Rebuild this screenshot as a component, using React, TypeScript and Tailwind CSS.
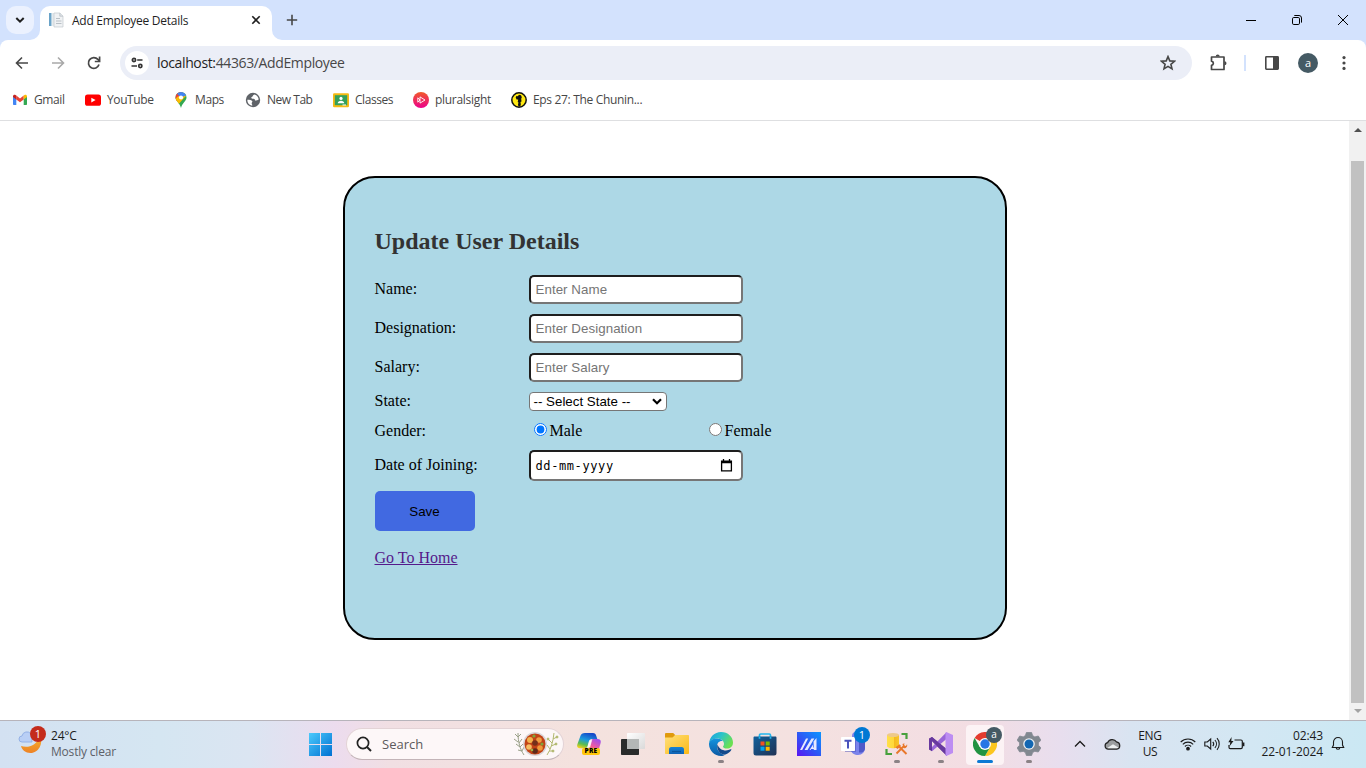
import React from "react";

const UI = "font-['Open_Sans','Noto_Sans',sans-serif]";

/* ---------- Browser chrome ---------- */

function WindowTitleBar() {
  return (
    <header className="flex h-10 items-stretch bg-[#d3e2fd]">
      <div className="flex w-10 items-start pl-1.5 pt-1.5">
        <button className="flex h-7 w-7 items-center justify-center rounded-[10px] bg-[#ebf1fe]">
          <svg width="10" height="8" viewBox="0 0 10 8" fill="none" stroke="#1f1f1f" strokeWidth="2">
            <path d="M1.3 2 5 5.7 8.7 2" />
          </svg>
        </button>
      </div>
      <div className="relative mt-1.5 flex w-[232px] items-center rounded-t-[10px] bg-white pb-1.5">
        <svg className="absolute -left-2.5 bottom-0" width="10" height="10" viewBox="0 0 10 10">
          <path d="M10 0v10H0A10 10 0 0 0 10 0" fill="#fff" />
        </svg>
        <svg className="absolute -right-2.5 bottom-0" width="10" height="10" viewBox="0 0 10 10">
          <path d="M0 0v10h10A10 10 0 0 1 0 0" fill="#fff" />
        </svg>
        <svg className="ml-2 shrink-0" width="16" height="16" viewBox="0 0 16 16">
          <rect x="1" y="1" width="2.5" height="13" fill="#6aa3c8" />
          <rect x="4" y="1" width="6.5" height="13" fill="#e6ebee" />
          <path d="M6 1h6l3 3v11H6z" fill="#f0f2f4" stroke="#c2c8cd" strokeWidth=".7" />
          <path d="M11.8 1v3.2H15" fill="#dfe4e8" stroke="#b5bcc2" strokeWidth=".7" />
          <path d="M8 6.5h4M8 9h5.5M8 11.5h5.5" stroke="#b9c0c6" strokeWidth="1" />
        </svg>
        <span className="ml-2 w-[176px] whitespace-nowrap pt-0.5 text-[12px] leading-4 tracking-[-0.27px] text-[#1f1f1f]">Add Employee Details</span>
        <svg width="16" height="16" viewBox="0 0 16 16" stroke="#1f1f1f" strokeWidth="1.6">
          <path d="m4.3 4.3 7.4 7.4m0-7.4-7.4 7.4" />
        </svg>
      </div>
      <div className="flex w-10 items-center justify-center">
        <svg width="12" height="12" viewBox="0 0 12 12" stroke="#474747" strokeWidth="1.6">
          <path d="M6 .8v10.4M.8 6h10.4" />
        </svg>
      </div>
      <div className="ml-auto flex">
        <div className="flex w-[46px] items-center justify-center">
          <svg width="10" height="10" viewBox="0 0 10 10" stroke="#000"><path d="M0 5.5h10" /></svg>
        </div>
        <div className="flex w-[46px] items-center justify-center">
          <svg width="10" height="10" viewBox="0 0 10 10" fill="none" stroke="#000">
            <rect x=".5" y="2.5" width="7" height="7" rx="1.3" />
            <path d="M2.3.5H7A2.5 2.5 0 0 1 9.5 3v4.6" />
          </svg>
        </div>
        <div className="flex w-[46px] items-center justify-center">
          <svg width="10" height="10" viewBox="0 0 10 10" stroke="#000"><path d="m0 0 10 10m0-10L0 10" /></svg>
        </div>
      </div>
    </header>
  );
}

function Toolbar() {
  return (
    <div className="bg-[#d3e2fd]">
      <div className="flex h-[46px] items-center rounded-t-[8px] bg-white pl-1">
        <div className="flex w-9 justify-center">
          <svg width="14" height="14" viewBox="0 0 14 14" fill="none" stroke="#474747" strokeWidth="1.6"><path d="M13 7H2M7 1.5 1.5 7 7 12.5" /></svg>
        </div>
        <div className="flex w-9 justify-center">
          <svg width="14" height="14" viewBox="0 0 14 14" fill="none" stroke="#a9a9a9" strokeWidth="1.6"><path d="M1 7h11M7 1.5 12.5 7 7 12.5" /></svg>
        </div>
        <div className="flex w-9 justify-center">
          <svg width="14" height="14" viewBox="0 0 14 14" fill="none" stroke="#474747" strokeWidth="1.7"><path d="M12 8.6A5.4 5.4 0 1 1 10.9 3.4L12.6 5M12.6.6v4.9H7.8" /></svg>
        </div>
        <div className="ml-2 flex h-[34px] w-[1072px] items-center rounded-full bg-[#ebeef7] pl-[5px]">
          <div className="flex h-6 w-6 items-center justify-center rounded-full bg-white">
            <svg width="14" height="12" viewBox="0 0 14 12" fill="none" stroke="#333" strokeWidth="1.7">
              <circle cx="4" cy="3" r="1.6" /><path d="M7.200 3H12.500M1.500 9h5.500" /><circle cx="10.300" cy="9" r="1.6" />
            </svg>
          </div>
          <span className="ml-2 text-[14px] leading-5 tracking-[-0.37px] text-[#474747]">
            <span className="text-[#1f1f1f]">localhost:</span>44363/AddEmployee
          </span>
          <svg className="ml-auto mr-4" width="16" height="16" viewBox="0 0 16 16" fill="none" stroke="#474747" strokeWidth="1.6">
            <path d="m8 1.6 1.8 4.3 4.7.4-3.6 3 1.1 4.6L8 11.4l-4 2.5 1.100-4.600-3.600-3 4.700-.4z" />
          </svg>
        </div>
        <div className="ml-2 flex w-9 justify-center">
          <svg width="18" height="18" viewBox="0 0 18 18" fill="none" stroke="#474747" strokeWidth="1.700" strokeLinejoin="round">
            <path d="M2.500 3h12.500v12.500H2.500v-4.200c2.500-.4 2.500-3.700 0-4.100z" />
            <path d="M6.700 2.500a2 2 0 0 1 4 0zM15.500 7.300a2 2 0 0 1 0 4z" fill="#474747" stroke="none" />
          </svg>
        </div>
        <div className="ml-2 h-4 w-0.5 bg-[#d3e2fd]" />
        <div className="ml-2 flex w-9 justify-center">
          <svg width="16" height="16" viewBox="0 0 16 16"><rect x="1.800" y="1.800" width="12.400" height="12.400" fill="none" stroke="#474747" strokeWidth="1.600" rx=".6" /><path d="M9 2h5v12H9z" fill="#474747" /></svg>
        </div>
        <div className="flex w-9 justify-center">
          <span className="flex h-5 w-5 items-center justify-center rounded-full bg-[#455a64] pb-0.5 text-[11px] leading-none text-white">a</span>
        </div>
        <div className="flex w-9 justify-center">
          <svg width="4" height="14" viewBox="0 0 4 14" fill="#474747"><circle cx="2" cy="1.600" r="1.600" /><circle cx="2" cy="7" r="1.600" /><circle cx="2" cy="12.400" r="1.600" /></svg>
        </div>
      </div>
    </div>
  );
}

function GmailIcon() {
  return (
    <svg width="16" height="16" viewBox="0 0 16 16">
      <path d="M1 4v8.200c0 .5.300.8.800.8H4.300V6.500z" fill="#4285f4" />
      <path d="M15 4v8.200c0 .5-.3.8-.8.8H11.700V6.500z" fill="#34a853" />
      <path d="M4.300 7.400V3.600L8 6.400l3.700-2.800v3.800L8 10.200z" fill="#ea4335" />
      <path d="M1 4.300c0-1.500 1.500-2 2.500-1.300l.8.6v3.800L1 5z" fill="#c5221f" />
      <path d="M15 4.300c0-1.500-1.500-2-2.500-1.300l-.8.6v3.800L15 5z" fill="#fbbc04" />
    </svg>
  );
}

function YouTubeIcon() {
  return (
    <svg width="16" height="16" viewBox="0 0 16 16"><rect y="2.400" width="16" height="11.400" rx="2.600" fill="#f00" /><path d="M6.300 5.700v4.800L10.600 8.100z" fill="#fff" /></svg>
  );
}

function MapsIcon() {
  return (
    <svg width="16" height="16" viewBox="0 0 16 16">
      <defs><clipPath id="pin"><path d="M8 0a5.500 5.500 0 0 0-5.500 5.500c0 3.500 4 5 5.500 10.500 1.500-5.500 5.500-7 5.500-10.500A5.500 5.500 0 0 0 8 0" /></clipPath></defs>
      <g clipPath="url(#pin)">
        <path d="M0 0h16v16H0z" fill="#34a853" />
        <path d="M0 0h9.500L8 5.500 3.600 9.500 0 6z" fill="#ea4335" />
        <path d="M3.400 9.300 12.500 0v4.200L5.300 12.400z" fill="#fbbc04" />
        <path d="M6 0h6l3 2.500L8 5.500 4 1.800z" fill="#4285f4" />
        <path d="m2 7 3.500-3 2 2-4 4z" fill="#fbbc04" />
      </g>
      <circle cx="8" cy="5.500" r="2.100" fill="#fff" />
    </svg>
  );
}

function GlobeIcon() {
  return (
    <svg width="16" height="16" viewBox="0 0 16 16">
      <circle cx="8" cy="8" r="7.200" fill="#5f6368" />
      <path d="M9.600 2.400C7.500 3 8.200 4.300 6.800 5c-1.200.6-.6 1.800.6 1.800 1.800 0 2.600.4 2.600 1.600 1.400.4 2.300-.2 3.700-.8A6 6 0 0 0 9.600 2.400M2.300 7.800c2.200.1 4.500.4 5 1.400.4 1-.7 1.200-.6 2.300.1.800.8 1 .5 2.200A6 6 0 0 1 2.300 7.800" fill="#fff" />
    </svg>
  );
}

function ClassroomIcon() {
  return (
    <svg width="16" height="16" viewBox="0 0 16 16">
      <rect y="1.200" width="16" height="14" rx="1.200" fill="#f5ba14" />
      <path d="M1.800 3.200h12.400v10H1.800z" fill="#34a05a" />
      <circle cx="8" cy="6.400" r="1.600" fill="#fff" />
      <path d="M4.700 11.300c0-3.500 6.600-3.500 6.600 0zM9.500 12.600h3.500v.8H9.500z" fill="#fff" />
    </svg>
  );
}

function PluralsightIcon() {
  return (
    <svg width="16" height="16" viewBox="0 0 16 16" fill="none" stroke="#fff" strokeWidth=".9">
      <defs><linearGradient id="ps" x2="0" y2="1"><stop stopColor="#f15b2a" /><stop offset="1" stopColor="#ec008c" /></linearGradient></defs>
      <circle cx="8" cy="8" r="8" fill="url(#ps)" stroke="none" />
      <path d="M4.800 5.800v4.400L7 8zM7 4.900v6.200L12 8z" />
    </svg>
  );
}

function AnimeIcon() {
  return (
    <svg width="16" height="16" viewBox="0 0 16 16">
      <circle cx="8" cy="8" r="7.200" fill="#ffe912" stroke="#111" strokeWidth="1.500" />
      <path d="M4.700 5.600 5.400 4l1.400.2L8 2.700l2 .5.800 2-.6 1.600.3 2.800-1 .4.300 2.600-.5 2H7.400l-.4-2 .5-2.200-.8-.4.500-2.600-1.600.2z" fill="#111" />
    </svg>
  );
}

const bookmarks = [
  { label: "Gmail", icon: <GmailIcon />, box: "w-[73px]", text: "tracking-[-0.4px]" },
  { label: "YouTube", icon: <YouTubeIcon />, box: "w-[88px]", text: "tracking-[-0.4px]" },
  { label: "Maps", icon: <MapsIcon />, box: "w-[72px]", text: "tracking-[-0.4px]" },
  { label: "New Tab", icon: <GlobeIcon />, box: "w-[88px]", text: "tracking-[-0.48px]" },
  { label: "Classes", icon: <ClassroomIcon />, box: "w-[80px]", text: "tracking-[-0.45px]" },
  { label: "pluralsight", icon: <PluralsightIcon />, box: "w-[98px]", text: "tracking-[-0.3px]" },
  { label: "Eps 27: The Chunin...", icon: <AnimeIcon />, box: "w-[150px]", text: "tracking-[-0.33px]" },
];

function BookmarksBar() {
  return (
    <nav className="flex h-[35px] items-center border-b border-[#dedfe1] bg-white pb-1.5 pl-3">
      {bookmarks.map((b) => (
        <div key={b.label} className={`flex shrink-0 items-center gap-1.5 ${b.box}`}>
          {b.icon}
          <span className={`whitespace-nowrap text-[12px] leading-4 text-[#474747] ${b.text}`}>{b.label}</span>
        </div>
      ))}
    </nav>
  );
}

/* ---------- Page ---------- */

const FIELD = "h-full w-[214px] rounded-[5px] border-2 border-t-[#1e1e1e] border-l-[#1e1e1e] border-r-[#767676] border-b-[#767676] bg-white font-['Liberation_Sans',Arial,sans-serif] text-[13.333px]";

function Row({ label, height, children }: { label: string; height: string; children: React.ReactNode }) {
  return (
    <div className={`flex items-center ${height}`}>
      <span className="w-[154px] shrink-0 pb-px leading-[18px]">{label}</span>
      {children}
    </div>
  );
}

function EmployeeForm() {
  return (
    <form className="h-[464px] w-[664px] rounded-[32px] border-2 border-black bg-[#add8e6] pl-[30px] pt-[50px] font-['Liberation_Serif','Times_New_Roman',serif] text-[16px] text-black">
      <h2 className="text-[24px] font-bold leading-[27px] text-[#333]">Update User Details</h2>
      <div className="mt-5 flex flex-col gap-2.5">
        <Row label="Name:" height="h-[29px]"><input className={`${FIELD} pl-[5px] tracking-[0.05px] placeholder:text-[#757575]`} placeholder="Enter Name" /></Row>
        <Row label="Designation:" height="h-[29px]"><input className={`${FIELD} pl-[5px] tracking-[0.05px] placeholder:text-[#757575]`} placeholder="Enter Designation" /></Row>
        <Row label="Salary:" height="h-[29px]"><input className={`${FIELD} pl-[5px] tracking-[0.05px] placeholder:text-[#757575]`} placeholder="Enter Salary" /></Row>
        <Row label="State:" height="h-[19px]">
          <button type="button" className="flex h-[19px] w-[138px] items-center justify-between rounded-[4px] border border-[#767676] bg-white pl-1 pr-1 font-['Liberation_Sans',Arial,sans-serif] text-[13.333px] leading-[15px]">
            -- Select State --
            <svg width="10" height="7" viewBox="0 0 10 7" fill="none" stroke="#000" strokeWidth="2.200"><path d="M1 1.200 5 5.200 9 1.200" /></svg>
          </button>
        </Row>
        <Row label="Gender:" height="h-[20px] -mb-px">
          <label className="flex w-[175px] items-center gap-[3px] pl-[5px]">
            <input type="radio" name="gender" defaultChecked className="mb-1 h-[13px] w-[13px] accent-[#0075ff]" />Male
          </label>
          <label className="flex items-center gap-[3px] pl-[5px]">
            <input type="radio" name="gender" className="mb-1 h-[13px] w-[13px]" />Female
          </label>
        </Row>
        <Row label="Date of Joining:" height="h-[31px]">
          <div className={`${FIELD} flex items-center justify-between pl-[5px] pr-2`}>
            <span className="whitespace-nowrap font-['DejaVu_Sans_Mono',monospace] text-[12px] leading-4 tracking-[0.6px]">dd-mm-yyyy</span>
            <svg width="13" height="13" viewBox="0 0 13 13" fill="none" stroke="#000" strokeWidth="1.300"><path d="M1.600 2.200h9.800v9.600H1.600zM1.600 3.500h9.800M3.500 0v2.500M9.500 0v2.500" /></svg>
          </div>
        </Row>
      </div>
      <button type="button" className="mt-2.5 block h-10 w-[100px] rounded-[5px] bg-[#4169e1] pt-px font-['Liberation_Sans',Arial,sans-serif] text-[13.333px]">Save</button>
      <a href="#home" className="mt-[18px] inline-block leading-[18px] text-[#551a8b] underline">Go To Home</a>
    </form>
  );
}

function Scrollbar() {
  return (
    <div className="flex w-[17px] flex-col items-center bg-[#f1f1f1]">
      <div className="flex h-10 items-start pt-[7px]">
        <svg width="8" height="4" viewBox="0 0 8 4"><path d="M0 4 4 0l4 4z" fill="#505050" /></svg>
      </div>
      <div className="h-[542px] w-[13px] bg-[#c1c1c1]" />
      <div className="flex flex-1 items-center pb-px">
        <svg width="8" height="4" viewBox="0 0 8 4"><path d="m0 0 4 4 4-4z" fill="#a3a3a3" /></svg>
      </div>
    </div>
  );
}

/* ---------- Taskbar ---------- */

function CopilotIcon() {
  return (
    <svg width="24" height="24" viewBox="0 0 24 24">
      <defs>
        <linearGradient id="cp1" x1=".6" y1="0" x2=".2" y2="1"><stop stopColor="#1648c8" /><stop offset=".45" stopColor="#1c9bdd" /><stop offset=".75" stopColor="#5fbd4d" /><stop offset="1" stopColor="#f4d21f" /></linearGradient>
        <linearGradient id="cp2" x1=".8" y1="0" x2=".2" y2="1"><stop stopColor="#9b4df0" /><stop offset=".55" stopColor="#ee5a9e" /><stop offset="1" stopColor="#fb8a45" /></linearGradient>
      </defs>
      <path d="M8 1h8c2 0 2.600 1 3.200 2.800L20.300 7H15c-2 0-2.700 1-3.200 2.600l-1.300 4.600c-.5 1.500-1.200 2-2.700 2H3c-2.600 0-3.300-1.700-2.700-3.800L3.400 4C4 2 5.500 1 8 1" fill="url(#cp1)" />
      <path d="M16 7h4.500c2.700 0 3.700 1.500 3.100 4l-1.700 6c-.5 2-1.900 3-3.900 3H9c2 0 2.500-1 3-2.500l2-7.800C14.500 8 15 7 16 7" fill="url(#cp2)" />
      <path d="M12.500 8.500 10.500 15h2.700l2-7z" fill="#fff" opacity=".8" />
    </svg>
  );
}

function ExplorerIcon() {
  return (
    <svg width="24" height="24" viewBox="0 0 24 24">
      <defs>
        <linearGradient id="fx" x2="1" y2="1"><stop stopColor="#ffe07a" /><stop offset="1" stopColor="#fbb917" /></linearGradient>
        <linearGradient id="fx2" x2="0" y2="1"><stop stopColor="#1784d4" /><stop offset="1" stopColor="#0f63b6" /></linearGradient>
      </defs>
      <path d="M0 2.200C0 1.500.5 1 1.200 1h7l2 2-1.500 3H0z" fill="#e09a0c" />
      <path d="M0 5.500h7.500L10.200 3H23c.6 0 1 .4 1 1v17c0 .6-.4 1-1 1H1c-.6 0-1-.4-1-1z" fill="url(#fx)" />
      <path d="M4 22v-4.500c0-1.500.8-2.500 2.300-2.500h10.400c1.500 0 2.300 1 2.300 2.500V22z" fill="url(#fx2)" />
      <path d="M7 19.500h9" stroke="#0a559c" strokeWidth="1.200" />
    </svg>
  );
}

function EdgeIcon() {
  return (
    <svg width="24" height="24" viewBox="0 0 24 24">
      <defs>
        <linearGradient id="ed1" x2="1" y2=".5"><stop stopColor="#1b9de2" /><stop offset=".5" stopColor="#2cc4c8" /><stop offset="1" stopColor="#6be052" /></linearGradient>
        <linearGradient id="ed2" x2="0" y2="1"><stop stopColor="#1494df" /><stop offset="1" stopColor="#0c59a4" /></linearGradient>
      </defs>
      <path d="M0 11.500C.5 5 5.500 0 12 0c7 0 12 5 12 10.500 0 4-3 6-6 6-2.500 0-4-1-4-1.800 0-.7 1-1 1-3C15 9 12 6.500 8.300 6.500 4 6.500.8 9 0 11.500" fill="url(#ed1)" />
      <path d="M0 11.500C.5 8.500 4 6.500 8 6.500c2.600 0 5 1.200 6 2.700-4-.6-6 2.300-6 5 0 4.500 3.500 8.300 8.300 8.300C15 23.500 13.500 24 12 24 5 24-.3 18 0 11.500" fill="url(#ed2)" />
      <path d="M8.500 12.200C7 17.500 11 22.800 16.500 22.500c3-1 5.300-3.300 5.900-4.700.3-.6-.2-.8-.7-.5-5 2.500-11.500 1-13.200-5.100" fill="#134a8c" />
    </svg>
  );
}

function StoreIcon() {
  return (
    <svg width="24" height="24" viewBox="0 0 24 24">
      <defs><linearGradient id="st" x2="1" y2="1"><stop stopColor="#11609c" /><stop offset="1" stopColor="#203254" /></linearGradient></defs>
      <path d="M6.500 6V3.300C6.500 2.500 7 2 7.700 2h8.600c.8 0 1.200.5 1.200 1.300V6" fill="none" stroke="#22b5ed" strokeWidth="1.700" />
      <path d="M.5 5.500C.5 5 1 4.500 1.500 4.500h21c.5 0 1 .5 1 1V21a2.500 2.500 0 0 1-2.500 2.500H3A2.500 2.500 0 0 1 .5 21z" fill="url(#st)" />
      <path d="M6.500 6.800V4.500M17.500 6.800V4.500" stroke="#22b5ed" strokeWidth="1.700" />
      <path d="M7.500 9.500h4v4h-4z" fill="#f25022" /><path d="M12.700 9.500h4v4h-4z" fill="#7fba00" />
      <path d="M7.500 14.700h4v4h-4z" fill="#00a4ef" /><path d="M12.700 14.700h4v4h-4z" fill="#ffb900" />
    </svg>
  );
}

function AsusIcon() {
  return (
    <svg width="24" height="24" viewBox="0 0 24 24">
      <defs><linearGradient id="as" x1="1" y1="0" x2="0" y2="1"><stop stopColor="#0b96ff" /><stop offset=".5" stopColor="#2c5bf5" /><stop offset="1" stopColor="#5a14f2" /></linearGradient></defs>
      <path d="M0 0h24v24H0z" fill="url(#as)" />
      <path d="M3 18 9 6.500h2.200L5.200 18zM7.500 18l7-11.500h2.800L10.500 18zM16.500 9.500l3-3.500v12h-2.700zM12.500 18l3.500-5.500v3h.8v1.500h-2.700l-.5 1z" fill="#e6e9ff" />
    </svg>
  );
}

function TeamsIcon() {
  return (
    <svg width="24" height="24" viewBox="0 0 24 24">
      <circle cx="15" cy="4" r="4" fill="#7b83eb" />
      <path d="M9 8h15v8c0 4-3 7-7 7-3.500 0-6.500-2-7.500-5z" fill="#7b83eb" />
      <path d="M18 8h6v8c0 2-1 4-3.500 4.500H18z" fill="#5059c9" />
      <path d="M4 7h11v13H4z" fill="#4b53bc" opacity=".5" />
      <rect y="5" width="14" height="14" rx=".8" fill="#fff" />
      <path d="M3.500 8.700h7M7 8.500v8" stroke="#4b53bc" strokeWidth="2" />
    </svg>
  );
}

function SqlToolsIcon() {
  return (
    <svg width="24" height="24" viewBox="0 0 24 24">
      <defs><linearGradient id="sq"><stop stopColor="#ffe04a" /><stop offset=".55" stopColor="#ffd83a" /><stop offset=".6" stopColor="#f5b91e" /><stop offset="1" stopColor="#f8c52a" /></linearGradient></defs>
      <path d="M2 3v11c0 3 12 3 12 0V3z" fill="url(#sq)" />
      <ellipse cx="8" cy="3" rx="6" ry="2" fill="#eec98a" />
      <path d="M16.500 2h5v5M1.500 17v5h5.500" fill="none" stroke="#48a13d" strokeWidth="2.200" />
      <path d="m11.500 21.500 8-8M13.500 14l8 8" stroke="#e9772a" strokeWidth="1.900" />
      <path d="m10.500 15.200 4-3 1.500 1.700-3.500 3zM17.500 12l2-.8-.5 2.300 2 .5 1-1.800c1 2.800-1.500 4.500-3.500 3.800z" fill="#e9772a" />
    </svg>
  );
}

function VisualStudioIcon() {
  return (
    <svg width="24" height="24" viewBox="0 0 24 24">
      <path d="M0 6.800 3 5v14.200l-3-1.700z" fill="#5c3399" />
      <path d="M3 5 18 17.500V24L3 9z" fill="#68399f" />
      <path d="M3 19.200V15L17.200.4 18 6.500z" fill="#9a66d8" />
      <path d="M0 6.800 3 5l15 12.500V24L3 9v7l-3 1.500z" fill="#68399f" />
      <path d="M17.300 0 24 3v18l-6.700 3c-.5-.2-.8-.5-.8-1V1c0-.5.300-.8.800-1" fill="#bd8df2" />
    </svg>
  );
}

function ChromeIcon() {
  return (
    <svg width="24" height="24" viewBox="0 0 24 24">
      <path d="M12 12 1.600 6A12 12 0 0 1 22.400 6z" fill="#e33b2e" />
      <path d="M12 6h10.400A12 12 0 0 1 12 24l5.200-9z" fill="#fcc61f" />
      <path d="m17.200 15-5.200 9A12 12 0 0 1 1.600 6l5.200 9z" fill="#229342" />
      <circle cx="12" cy="12" r="6" fill="#fff" /><circle cx="12" cy="12" r="4.700" fill="#2676e5" />
    </svg>
  );
}

function SettingsIcon() {
  return (
    <svg width="24" height="24" viewBox="0 0 24 24">
      <path d="M9.400.5h5.200l1 3.100 2.200 1.300 3.500-.9L23.900 8.300 21.400 10.800v2.500l2.500 2.500-2.600 4.200-3.500-.7-2.200 1.200-1 3H9.400l-1-3-2.200-1.200-3.500.7L.1 15.800l2.500-2.500v-2.500L.1 8.300 2.700 4l3.500.9 2.200-1.300z" fill="#818890" stroke="#818890" strokeWidth=".8" strokeLinejoin="round" />
      <circle cx="12" cy="12" r="5.800" fill="#eef0f2" /><circle cx="12" cy="12" r="4.500" fill="#1267b2" />
    </svg>
  );
}

function TaskViewIcon() {
  return (
    <svg width="24" height="24" viewBox="0 0 24 24">
      <defs><linearGradient id="tv" x2="1" y2="1"><stop stopColor="#fff" /><stop offset="1" stopColor="#d9d9d9" /></linearGradient></defs>
      <rect y="7" width="18" height="16" rx=".8" fill="#292b2b" />
      <rect x="6" y="1" width="18" height="16" rx=".8" fill="url(#tv)" />
      <path d="M6 7h12v10H6z" fill="#b4b7b6" />
    </svg>
  );
}

type App = { name: string; icon: React.ReactNode; badge?: React.ReactNode; running?: boolean; active?: boolean };

const apps: App[] = [
  { name: "copilot", icon: <CopilotIcon />, badge: <span className="absolute left-3 top-[23px] flex h-[7px] w-[18px] items-center justify-center rounded-[2px] bg-[#ffc60b] text-[6.5px] font-extrabold leading-none tracking-[0.3px] text-black">PRE</span> },
  { name: "taskview", icon: <TaskViewIcon /> },
  { name: "explorer", icon: <ExplorerIcon /> },
  { name: "edge", icon: <EdgeIcon />, running: true },
  { name: "store", icon: <StoreIcon /> },
  { name: "asus", icon: <AsusIcon /> },
  { name: "teams", icon: <TeamsIcon />, badge: <span className="absolute left-5 top-0.5 flex h-4 w-4 items-center justify-center rounded-full bg-[#0078d4] text-[11px] leading-none text-white">1</span> },
  { name: "sql", icon: <SqlToolsIcon />, running: true },
  { name: "vs", icon: <VisualStudioIcon />, running: true },
  { name: "chrome", icon: <ChromeIcon />, active: true, badge: <span className="absolute left-5 top-0.5 flex h-4 w-4 items-center justify-center rounded-full bg-[#455a64] pb-px text-[10px] leading-none text-white">a</span> },
  { name: "settings", icon: <SettingsIcon />, running: true },
];

function SearchBox() {
  return (
    <div className="mb-0.5 ml-1 flex h-8 w-[218px] items-center rounded-full border border-[#e3d3d6] border-b-[#c3b4b8] bg-[#fdf7f8] pl-[9px]">
      <svg width="16" height="16" viewBox="0 0 16 16" fill="none" stroke="#222" strokeWidth="1.700"><circle cx="7" cy="7" r="5.600" /><path d="m11 11 4 4" strokeWidth="2" /></svg>
      <span className="ml-2.5 text-[13px] leading-4 text-[#5c5a5c]">Search</span>
      <svg className="ml-auto mr-1" width="46" height="28" viewBox="0 0 46 28">
        <g stroke="#9aa088" strokeWidth="1" fill="none">
          <path d="M5 3C5 12 7 19 11 25M5 7 2 4M5 7l3-3M5 12l-4-3M6 13l3-4M7 17l-4-3M7 17l3-3M9 21l-4-1M9 21l2-4" />
        </g>
        <g stroke="#b2b86f" strokeWidth="1" fill="#b2b86f">
          <path d="M41 3C40 12 38 19 34 25M40 9l4-2M39 13l-4-4M38 16l5-2M37 19l-3-4M36 21l4 0" fill="none" />
          <circle cx="44" cy="7" r="1" /><circle cx="35" cy="9" r="1" /><circle cx="43" cy="14" r="1" /><circle cx="40" cy="21" r="1" />
        </g>
        <circle cx="22" cy="14" r="12" fill="#d9d6d9" /><circle cx="22" cy="14" r="10.500" fill="#c24317" />
        <circle cx="17" cy="10" r="3" fill="#f2b24d" /><circle cx="26" cy="10" r="2.800" fill="#ef9f43" /><circle cx="16" cy="17" r="2.800" fill="#f6bd63" />
        <circle cx="27" cy="18" r="2.800" fill="#f09a3a" /><circle cx="22" cy="13" r="2.800" fill="#74301b" /><circle cx="22" cy="21" r="2.800" fill="#5e2a1b" />
        <circle cx="21" cy="6" r="1.600" fill="#7fa63a" /><circle cx="29" cy="14" r="1.600" fill="#7fa63a" /><circle cx="19" cy="20" r="1.300" fill="#9fb44a" />
      </svg>
    </div>
  );
}

function SystemTray() {
  return (
    <div className="flex items-center pb-0.5">
      <div className="ml-[13px] flex w-8 justify-center">
        <svg width="12" height="8" viewBox="0 0 12 8" fill="none" stroke="#1b1b1b" strokeWidth="1.300"><path d="M1 6.500 6 1.500l5 5" /></svg>
      </div>
      <div className="flex w-8 justify-center">
        <svg width="17" height="12" viewBox="0 0 17 12">
          <path d="M4.300 11.200A3.300 3.300 0 0 1 3.600 4.700 5 5 0 0 1 12.500 3.900a3.700 3.700 0 0 1 .3 7.300z" fill="#9b9d9f" />
          <path d="M2.500 10.500 9 6.200l5.800 3.500c-.5.600-1.200 1-2 1H4.300z" fill="#eceeef" />
          <path d="M4.300 11.200A3.300 3.300 0 0 1 3.600 4.700 5 5 0 0 1 12.500 3.900a3.700 3.700 0 0 1 .3 7.300z" fill="none" stroke="#222" strokeWidth="1.200" />
        </svg>
      </div>
      <div className="w-11 pt-px text-center text-[12px] leading-4 tracking-[-0.3px]">ENG<br />US</div>
      <div className="ml-1 flex w-6 justify-center">
        <svg width="16" height="14" viewBox="0 0 16 14" fill="none" stroke="#1b1b1b" strokeWidth="1.100">
          <path d="M.7 5a10.300 10.300 0 0 1 14.600 0M2.800 7.300a7.300 7.300 0 0 1 10.400 0M4.900 9.500a4.400 4.400 0 0 1 6.200 0" /><circle cx="8" cy="11.700" r="1.300" fill="#1b1b1b" />
        </svg>
      </div>
      <div className="flex w-6 justify-center">
        <svg width="16" height="14" viewBox="0 0 16 14" fill="none" stroke="#1b1b1b" strokeWidth="1.100">
          <path d="M.8 5v4h2.500l3.400 3V2L3.300 5zM8.800 4.800a3.400 3.400 0 0 1 0 4.400M10.900 3a6 6 0 0 1 0 8M13 1.200a8.700 8.700 0 0 1 0 11.600" />
        </svg>
      </div>
      <div className="flex w-6 justify-center">
        <svg width="17" height="14" viewBox="0 0 17 14" fill="none" stroke="#1b1b1b" strokeWidth="1.200">
          <path d="M6.500 3h6.500c.8 0 1.300.5 1.300 1.300v6c0 .8-.5 1.300-1.300 1.300H2.300C1.500 11.600 1 11.100 1 10.300V8" /><path d="M15.500 5.500v3.700" strokeWidth="1.800" />
          <path d="M3.600 0 .3 5.300h2L1.600 9.200 5.500 4H3.300z" fill="#1b1b1b" stroke="none" />
        </svg>
      </div>
      <div className="w-[75px] whitespace-nowrap text-right text-[12px] leading-4 tracking-[-0.1px]">02:43<br />22-01-2024</div>
      <div className="ml-[3px] flex w-6 justify-center">
        <svg width="14" height="15" viewBox="0 0 14 15" fill="none" stroke="#1b1b1b" strokeWidth="1.100">
          <path d="M2.500 6a4.500 4.500 0 0 1 9 0v3l1.200 2.500H1.300L2.500 9zM5.200 12a1.900 1.900 0 0 0 3.600 0" />
        </svg>
      </div>
    </div>
  );
}

function Taskbar() {
  return (
    <footer className="flex h-12 items-center border-t border-[#b7b4bb] bg-[linear-gradient(90deg,#d3e1f2_0px,#d5e6f2_160px,#dbe5f2_250px,#ecdcee_335px,#f1dfe3_390px,#f4e2de_580px,#f4e1e0_800px,#f3dde3_980px,#e8deee_1060px,#d9e4f1_1130px,#d3e7f3_1250px,#cbe8f3_1366px)] text-[#1b1b1b]">
      <div className="flex w-[298px] items-center pb-0.5 pl-[18px]">
        <div className="relative h-8 w-8">
          <svg width="28" height="28" viewBox="0 0 28 28">
            <defs><linearGradient id="mn" x2="0" y2="1"><stop stopColor="#f7b32b" /><stop offset="1" stopColor="#ed8226" /></linearGradient></defs>
            <path d="M22 8c3.500 7-1 17-9.500 17C7.500 25 4 22 3 18c6 2 15 1 19-10" fill="url(#mn)" />
            <path d="M4 14a3 3 0 0 1 0-6 5 5 0 0 1 9-2l1 8z" fill="#b9cff5" stroke="#94b1e6" />
          </svg>
          <span className="absolute -top-0.5 left-3 flex h-4 w-4 items-center justify-center rounded-full bg-[#c42b1c] text-[11px] leading-none text-white">1</span>
        </div>
        <div className="pl-px text-[12px] leading-4 tracking-[-0.2px]">
          24°C
          <div className="text-[#5c6168] tracking-[-0.2px]">Mostly clear</div>
        </div>
      </div>
      <div className="flex w-11 justify-center pb-px">
        <svg width="24" height="24" viewBox="0 0 24 24">
          <defs><linearGradient id="wn" x2="1" y2="1"><stop stopColor="#4ccafc" /><stop offset="1" stopColor="#0070d2" /></linearGradient></defs>
          <path d="M1 1h11v11H1zM13 1h11v11H13zM1 13h11v11H1zM13 13h11v11H13z" fill="url(#wn)" />
        </svg>
      </div>
      <SearchBox />
      <div className="ml-[3px] flex">
        {apps.map((a) => (
          <div key={a.name} className="flex w-11 justify-center">
            <div className={`relative flex h-10 w-[38px] flex-col items-center rounded ${a.active ? "bg-[#fcf3f5]" : ""}`}>
              <div className="mt-[7px]">{a.icon}</div>
              {a.badge}
              {a.active && <div className="mt-1 h-[3px] w-4 rounded-full bg-[#0b79d4]" />}
              {a.running && <div className="mt-1 h-[3px] w-1.5 rounded-full bg-[#8b8285]" />}
            </div>
          </div>
        ))}
      </div>
      <SystemTray />
    </footer>
  );
}

export default function App() {
  return (
    <div className={`flex h-[768px] w-[1366px] flex-col overflow-hidden bg-white ${UI}`}>
      <WindowTitleBar />
      <Toolbar />
      <BookmarksBar />
      <main className="flex h-[599px]">
        <div className="flex flex-1 justify-center pt-[55px]">
          <EmployeeForm />
        </div>
        <Scrollbar />
      </main>
      <Taskbar />
    </div>
  );
}
